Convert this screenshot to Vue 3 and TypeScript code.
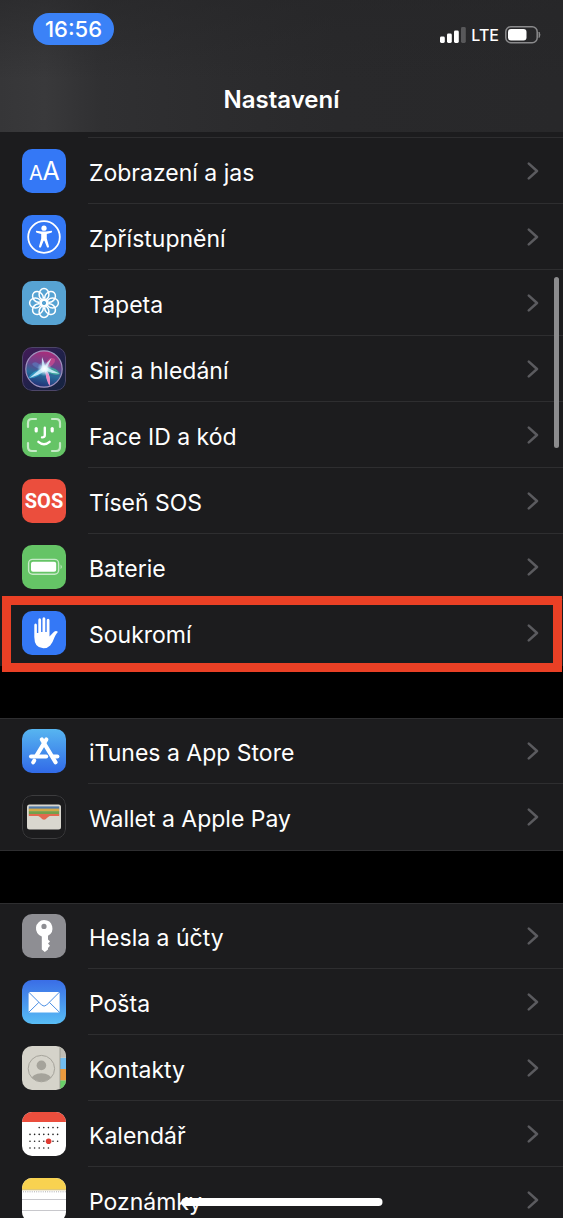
<script setup lang="ts">
type IconName =
  | 'display' | 'access' | 'wallpaper' | 'siri' | 'face' | 'sos' | 'battery' | 'privacy'
  | 'store' | 'wallet' | 'key' | 'mail' | 'contacts' | 'calendar' | 'notes'

interface Item {
  icon: IconName
  label: string
  marked?: boolean
}

const groups: Item[][] = [
  [
    { icon: 'display', label: 'Zobrazení a jas' },
    { icon: 'access', label: 'Zpřístupnění' },
    { icon: 'wallpaper', label: 'Tapeta' },
    { icon: 'siri', label: 'Siri a hledání' },
    { icon: 'face', label: 'Face ID a kód' },
    { icon: 'sos', label: 'Tíseň SOS' },
    { icon: 'battery', label: 'Baterie' },
    { icon: 'privacy', label: 'Soukromí', marked: true },
  ],
  [
    { icon: 'store', label: 'iTunes a App Store' },
    { icon: 'wallet', label: 'Wallet a Apple Pay' },
  ],
  [
    { icon: 'key', label: 'Hesla a účty' },
    { icon: 'mail', label: 'Pošta' },
    { icon: 'contacts', label: 'Kontakty' },
    { icon: 'calendar', label: 'Kalendář' },
    { icon: 'notes', label: 'Poznámky' },
  ],
]

const petals = [0, 45, 90, 135, 180, 225, 270, 315]

const days: { x: number; y: number }[] = []
const weeks: [number, number][] = [[2, 6], [0, 6], [0, 6], [0, 4]]
weeks.forEach(([from, to], row) => {
  for (let col = from; col <= to; col++) {
    days.push({ x: 8 + col * 4.6, y: 15.6 + row * 6.8 })
  }
})
</script>

<template>
  <div class="screen">
    <header class="header">
      <div class="status">
        <span class="time">16:56</span>
        <div class="indicators">
          <svg class="signal" viewBox="0 0 26 16" aria-hidden="true">
            <rect x="0" y="9.5" width="4.8" height="6.5" rx="1.4" fill="#fff" />
            <rect x="7" y="6.5" width="4.8" height="9.5" rx="1.4" fill="#fff" />
            <rect x="14" y="3.5" width="4.8" height="12.5" rx="1.4" fill="#fff" />
            <rect x="21" y="0" width="4.8" height="16" rx="1.4" fill="#58585a" />
          </svg>
          <span class="network">LTE</span>
          <svg class="charge" viewBox="0 0 36 18" aria-hidden="true">
            <rect x="0.8" y="0.8" width="31.4" height="16" rx="5" fill="none" stroke="#8a8a8c" stroke-width="1.5" />
            <rect x="3" y="3" width="18.5" height="11.6" rx="3" fill="#fff" />
            <path d="M34 6 Q36 8.8 34 11.6Z" fill="#8a8a8c" stroke="#8a8a8c" stroke-width="0.8" />
          </svg>
        </div>
      </div>
      <h1 class="title">Nastavení</h1>
    </header>

    <main class="list">
      <ul v-for="(group, g) in groups" :key="g" class="group">
        <li v-for="item in group" :key="item.label" class="item" :class="{ marked: item.marked }">
          <a class="link" href="#">
            <svg class="icon" viewBox="0 0 44 44" aria-hidden="true">
              <template v-if="item.icon === 'display'">
                <rect width="44" height="44" fill="#3478f6" />
                <text x="7" y="31" class="letter small">A</text>
                <text x="20.4" y="31" class="letter large">A</text>
              </template>

              <template v-else-if="item.icon === 'access'">
                <rect width="44" height="44" fill="#3478f6" />
                <circle cx="22" cy="22" r="15.8" fill="none" stroke="#fff" stroke-width="1.8" />
                <circle cx="22" cy="13.2" r="2.6" fill="#fff" />
                <path d="M14.2 15.8 Q13.2 17.2 14.8 17.8 L19.2 19 V23.5 L17 31.4 Q17.2 33 18.9 32.5 L21.6 25.7 H22.4 L25.1 32.5 Q26.8 33 27 31.4 L24.8 23.5 V19 L29.2 17.8 Q30.8 17.2 29.8 15.8 L24 16.6 H20Z" fill="#fff" />
              </template>

              <template v-else-if="item.icon === 'wallpaper'">
                <rect width="44" height="44" fill="#57a3d3" />
                <g fill="none" stroke="#fff" stroke-width="1.5">
                  <ellipse v-for="angle in petals" :key="angle" cx="22" cy="13.4" rx="4.9" ry="5.8" :transform="`rotate(${angle} 22 22)`" />
                  <circle cx="22" cy="22" r="3" />
                </g>
              </template>

              <template v-else-if="item.icon === 'siri'">
                <defs>
                  <linearGradient id="siri-back" x1="0" y1="0" x2="1" y2="1">
                    <stop offset="0" stop-color="#451a58" />
                    <stop offset="0.5" stop-color="#21214a" />
                    <stop offset="1" stop-color="#14243f" />
                  </linearGradient>
                  <linearGradient id="siri-orb" x1="0.6" y1="0" x2="0.4" y2="1">
                    <stop offset="0" stop-color="#b02a78" />
                    <stop offset="0.4" stop-color="#67468f" />
                    <stop offset="0.65" stop-color="#276d9b" />
                    <stop offset="1" stop-color="#232d75" />
                  </linearGradient>
                  <radialGradient id="siri-glow">
                    <stop offset="0" stop-color="#fff" />
                    <stop offset="0.4" stop-color="#e9faff" stop-opacity="0.85" />
                    <stop offset="1" stop-color="#8fdcf5" stop-opacity="0" />
                  </radialGradient>
                </defs>
                <rect width="44" height="44" fill="url(#siri-back)" />
                <circle cx="22" cy="22" r="18.2" fill="url(#siri-orb)" stroke="#a093be" stroke-width="1.2" />
                <path d="M22 21 Q13 12 10 17 Q13 22 22 22Z" fill="#5a86c8" opacity="0.55" />
                <path d="M22 21 Q26 8 33 12 Q34 18 23 22Z" fill="#e04f93" opacity="0.6" />
                <path d="M22 21 Q10 24 6 31 Q14 33 23 23Z" fill="#34b6dc" opacity="0.6" />
                <path d="M22 21 Q33 18 38 27 Q32 30 23 23Z" fill="#35c7a0" opacity="0.65" />
                <path d="M20 10 Q19.5 17 20.5 20.5 Q13 26 7.5 31 Q16 28.5 23 24 Q24 31 27.5 38.5 Q29 29 25 24 Q31 27 37.5 26.5 Q30 23 25 20.5 Q28 15 29.5 11 Q25.5 14.5 23 19 Q22 14 20 10Z" fill="#d7f3ff" opacity="0.85" />
                <path d="M23.5 25 Q24 33 27.5 39 Q29.5 31 25 24.5Z" fill="#f08bc5" />
                <circle cx="22.5" cy="21.8" r="7.5" fill="url(#siri-glow)" />
                <rect x="0.5" y="0.5" width="43" height="43" rx="9.5" fill="none" stroke="#4d4668" />
              </template>

              <template v-else-if="item.icon === 'face'">
                <rect width="44" height="44" fill="#65c466" />
                <g fill="none" stroke-linecap="round">
                  <g stroke="#c7eac8" stroke-width="2.2">
                    <path d="M6 14 V10 Q6 6 10 6 H14" />
                    <path d="M30 6 H34 Q38 6 38 10 V14" />
                    <path d="M38 30 V34 Q38 38 34 38 H30" />
                    <path d="M14 38 H10 Q6 38 6 34 V30" />
                  </g>
                  <g stroke="#fff">
                    <path d="M14.2 15.6 V18" stroke-width="3.2" />
                    <path d="M30.2 15.6 V18" stroke-width="3.2" />
                    <path d="M22.8 14.8 V22 Q22.8 24.6 20 24.4" stroke-width="2.4" />
                    <path d="M16.4 28.8 Q22 33.6 27.6 28.8" stroke-width="2.4" />
                  </g>
                </g>
              </template>

              <template v-else-if="item.icon === 'sos'">
                <rect width="44" height="44" fill="#eb4e3d" />
                <text x="22" y="29" class="sos">SOS</text>
              </template>

              <template v-else-if="item.icon === 'battery'">
                <rect width="44" height="44" fill="#65c466" />
                <rect x="6.6" y="14.4" width="30" height="14.8" rx="4" fill="none" stroke="#c7eac8" stroke-width="1.4" />
                <rect x="9" y="16.8" width="25.2" height="10" rx="2" fill="#fff" />
                <path d="M38.6 19.4 Q41 21.8 38.6 24.2Z" fill="#c7eac8" />
              </template>

              <template v-else-if="item.icon === 'privacy'">
                <rect width="44" height="44" fill="#3478f6" />
                <path d="M12.3 14 Q12.3 12.5 13.6 12.5 Q14.9 12.5 14.9 14 V22 H16.3 V9 Q16.3 7.3 17.7 7.3 Q19.1 7.3 19.1 9 V21 H20.5 V7.8 Q20.5 6.3 21.9 6.3 Q23.3 6.3 23.3 7.8 V21 H24.7 V9.3 Q24.7 7.8 26.1 7.8 Q27.5 7.8 27.5 9.3 V25.5 L31.8 20.9 Q33.8 19.2 35.6 20.4 Q36.2 20.9 35 22 Q33.6 23.6 32.4 26.6 Q30.8 31.6 28.2 34.4 Q25.6 37.2 21.4 37.2 Q12.3 37.2 12.3 26Z" fill="#fff" />
              </template>

              <template v-else-if="item.icon === 'store'">
                <defs>
                  <linearGradient id="store-back" x1="0" y1="0" x2="0" y2="1">
                    <stop offset="0" stop-color="#57b5f0" />
                    <stop offset="1" stop-color="#316ae8" />
                  </linearGradient>
                </defs>
                <rect width="44" height="44" fill="url(#store-back)" />
                <g fill="none" stroke="#fff" stroke-width="4" stroke-linecap="round">
                  <path d="M24.4 10.4 L14.6 26.4" />
                  <path d="M19.8 10.4 L33.6 33.4" />
                  <path d="M9 27.4 H24.2" />
                  <path d="M31.4 27.4 H35.4" />
                  <path d="M12.2 31.6 L11.2 33.4" />
                </g>
              </template>

              <template v-else-if="item.icon === 'wallet'">
                <rect width="44" height="44" fill="#1c1c1e" />
                <rect x="0.5" y="0.5" width="43" height="43" rx="9.5" fill="none" stroke="#3c3c3e" />
                <rect x="5" y="9.6" width="34" height="25" rx="2.5" fill="#d9d7cf" />
                <rect x="6.8" y="11.4" width="30.4" height="3" fill="#507aa8" />
                <rect x="6.8" y="13.6" width="30.4" height="3" fill="#d2a846" />
                <rect x="6.8" y="16.2" width="30.4" height="3.2" fill="#73a04c" />
                <rect x="6.8" y="19" width="30.4" height="2.4" fill="#e2694f" />
                <path d="M6.8 21 H15.8 Q17.4 21 18.8 22.8 Q22 26.8 25.2 22.8 Q26.6 21 28.2 21 H37.2 V33 H6.8Z" fill="#d9d7cf" />
                <path d="M15.6 20.4 Q17.6 21 18.8 22.8 Q22 26.8 25.2 22.8 Q26.6 21 28.4 20.4Z" fill="#e2694f" />
              </template>

              <template v-else-if="item.icon === 'key'">
                <rect width="44" height="44" fill="#8e8e93" />
                <path fill-rule="evenodd" d="M22 6 A8.4 8.4 0 0 1 26 21.8 V25.4 L28 27.4 L26 29.6 L28 31.8 L26 34 V35.4 L22.8 38 L19.8 35.6 V22.4 A8.4 8.4 0 0 1 22 6Z M22 9.8 A2.6 2.6 0 1 0 22 15 A2.6 2.6 0 1 0 22 9.8Z" fill="#fff" />
              </template>

              <template v-else-if="item.icon === 'mail'">
                <defs>
                  <linearGradient id="mail-back" x1="0" y1="0" x2="0" y2="1">
                    <stop offset="0" stop-color="#3a6de6" />
                    <stop offset="1" stop-color="#58bdf5" />
                  </linearGradient>
                </defs>
                <rect width="44" height="44" fill="url(#mail-back)" />
                <rect x="6.6" y="12" width="31" height="20.4" rx="1.5" fill="#fff" />
                <g fill="none" stroke="#4b8fe4" stroke-width="1">
                  <path d="M7 12.4 L19.6 25 Q22.1 27.2 24.6 25 L37.2 12.4" />
                  <path d="M7 32 L16.8 22.4" />
                  <path d="M37.2 32 L27.4 22.4" />
                </g>
              </template>

              <template v-else-if="item.icon === 'contacts'">
                <defs>
                  <clipPath id="contact-clip"><circle cx="19.4" cy="22.6" r="13" /></clipPath>
                </defs>
                <rect width="44" height="44" fill="#d5d3ca" />
                <rect x="38" width="6" height="11.5" fill="#c0beb6" />
                <rect x="38" y="12" width="6" height="11" fill="#71bdf0" />
                <rect x="38" y="23" width="6" height="11.5" fill="#eb9a3e" />
                <rect x="38" y="34.5" width="6" height="10" fill="#68cf68" />
                <path d="M38 0 V44" stroke="#96948c" stroke-width="0.8" />
                <circle cx="19.4" cy="22.6" r="13.2" fill="none" stroke="#a5a39b" stroke-width="1" />
                <g clip-path="url(#contact-clip)" fill="#a5a39b">
                  <circle cx="19.4" cy="19.4" r="4.8" />
                  <ellipse cx="19.4" cy="34" rx="10.5" ry="6.8" />
                </g>
              </template>

              <template v-else-if="item.icon === 'calendar'">
                <rect width="44" height="44" fill="#fff" />
                <rect width="44" height="10" fill="#eb4e3d" />
                <circle v-for="day in days" :key="`${day.x}-${day.y}`" :cx="day.x" :cy="day.y" r="0.8" fill="#222" />
                <circle cx="26.6" cy="29.2" r="2.8" fill="#df3b32" />
              </template>

              <template v-else>
                <rect width="44" height="44" fill="#fff" />
                <rect width="44" height="11.5" fill="#f8d250" />
                <path d="M0 11.8 H44" stroke="#c9ae55" stroke-width="0.8" />
                <path d="M1 13.8 H44" stroke="#999" stroke-width="0.9" stroke-dasharray="0.9 1.3" />
                <path d="M0 21.5 H44 M0 32.5 H44" stroke="#c8c8cc" />
              </template>
            </svg>
            <span class="body">
              <span class="label">{{ item.label }}</span>
              <svg class="chevron" viewBox="0 0 12 18" aria-hidden="true">
                <path d="M1.8 1.6 L10 9 L1.8 16.4" fill="none" stroke="#5b5b5f" stroke-width="2.5" stroke-linecap="round" stroke-linejoin="round" />
              </svg>
            </span>
          </a>
        </li>
      </ul>
    </main>

    <div class="scrollbar"></div>
    <div class="home"></div>
  </div>
</template>

<style>
body {
  margin: 0;
  background: #000;
}
</style>

<style scoped>
.screen {
  position: relative;
  display: flex;
  flex-direction: column;
  height: 100vh;
  overflow: hidden;
  background: #000;
  color: #fff;
  font-family: Inter, "Liberation Sans", sans-serif;
}

.header {
  flex: none;
  background:
    linear-gradient(to bottom, rgba(38, 38, 40, 0.6), rgba(38, 38, 40, 0) 60%),
    linear-gradient(to right, #363638, #39393b 8%, #303032 18%, #2c2c2e 40%, #29292b 60%, #28282a);
}

.status {
  display: flex;
  justify-content: space-between;
  align-items: flex-start;
  height: 67px;
  padding: 13px 22px 0 33px;
  box-sizing: border-box;
}

.time {
  width: 81px;
  border-radius: 16px;
  background: #3b82f7;
  font-size: 22px;
  font-weight: 500;
  line-height: 32px;
  text-align: center;
}

.indicators {
  display: flex;
  align-items: center;
  height: 44px;
}

.signal {
  width: 26px;
  height: 16px;
  margin-right: 5px;
}

.network {
  margin-right: 6px;
  font-size: 16px;
  font-weight: 500;
}

.charge {
  width: 36px;
  height: 18px;
}

.title {
  margin: 0;
  height: 65px;
  font-size: 24px;
  font-weight: 600;
  line-height: 65px;
  text-align: center;
}

.list {
  flex: 1;
  min-height: 0;
  overflow: hidden;
}

.group {
  margin: 0;
  padding: 0;
  list-style: none;
  background: #1c1c1e;
}

.group:first-child {
  padding-top: 6px;
  background: linear-gradient(#2e2e30, #2e2e30) 88px 5px / 100% 1px no-repeat #1c1c1e;
}

.group + .group {
  margin-top: 52px;
  border-bottom: 1px solid #2e2e30;
}

.group + .group .item:first-child {
  box-shadow: inset 0 1px #2e2e30;
}

.item {
  position: relative;
}

.link {
  display: flex;
  align-items: center;
  padding-left: 22px;
  color: inherit;
  text-decoration: none;
}

.icon {
  flex: none;
  width: 44px;
  height: 44px;
  margin-right: 22px;
  border-radius: 10px;
}

.letter {
  fill: #fff;
  font-family: Inter, sans-serif;
}

.small {
  font-size: 20px;
}

.large {
  font-size: 25px;
}

.sos {
  fill: #fff;
  font-family: Roboto, sans-serif;
  font-size: 20px;
  font-weight: 700;
  text-anchor: middle;
}

.body {
  flex: 1;
  display: flex;
  align-items: center;
  justify-content: space-between;
  height: 66px;
  padding-right: 24px;
  box-sizing: border-box;
  border-bottom: 1px solid #2e2e30;
}

.item:last-child .body {
  border-bottom-color: transparent;
}

.label {
  padding: 4px 0 0 1px;
  font-size: 23px;
  line-height: 32px;
}

.chevron {
  width: 12px;
  height: 18px;
}

.marked::after {
  content: "";
  position: absolute;
  inset: -4px 1px -6px 2px;
  border: 9px solid #ea4025;
  pointer-events: none;
}

.scrollbar {
  position: absolute;
  top: 277px;
  right: 4px;
  width: 5px;
  height: 171px;
  border-radius: 3px;
  background: #8c8c8e;
}

.home {
  position: absolute;
  bottom: 12px;
  left: 50%;
  width: 201px;
  height: 8px;
  border-radius: 4px;
  background: #fff;
  transform: translateX(-50%);
}
</style>
